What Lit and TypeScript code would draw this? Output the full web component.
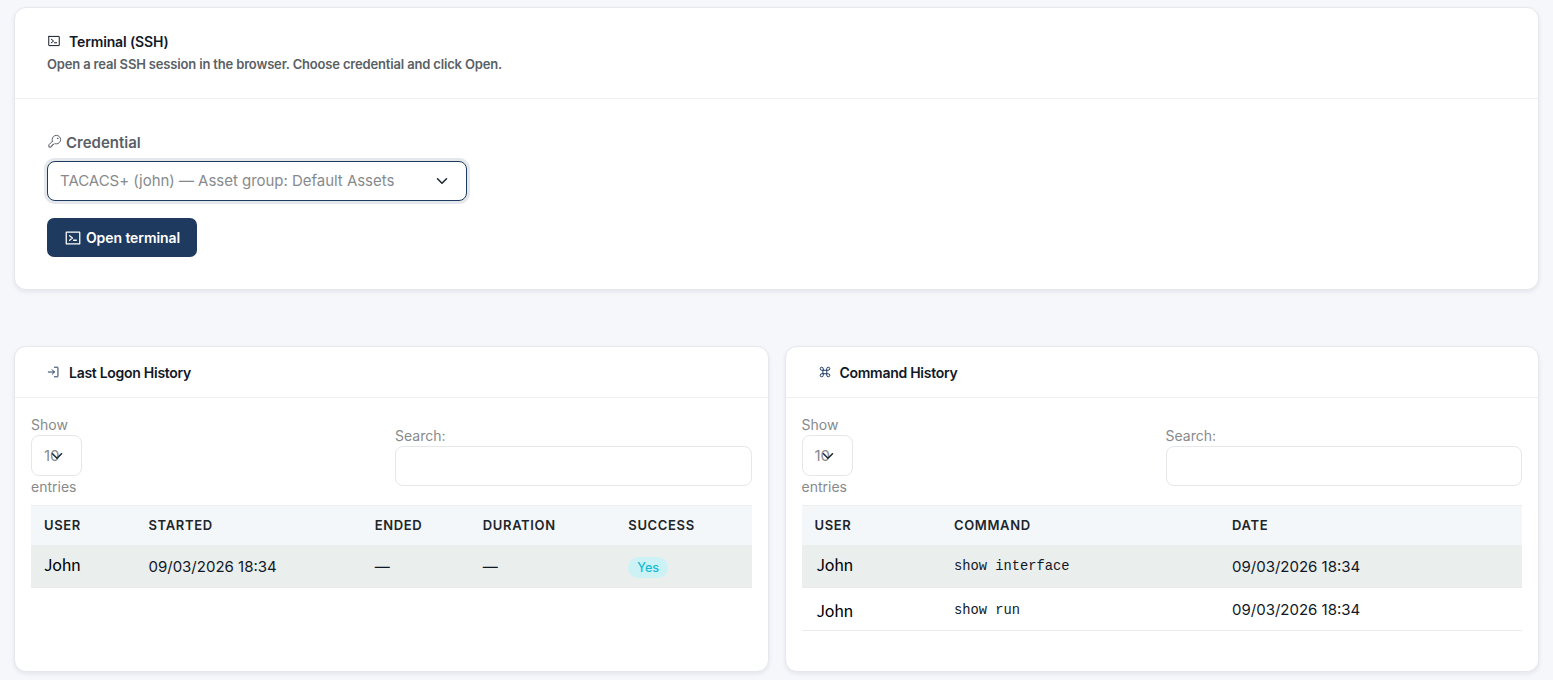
import { html, svg, css, LitElement, TemplateResult } from 'lit';
import { customElement, property } from 'lit/decorators.js';

const ICONS: Record<string, TemplateResult> = {
    terminal: svg`
        <rect x="32" y="44" width="192" height="168" rx="4"/>
        <polyline points="80 96 120 128 80 160"/>
        <line x1="136" y1="160" x2="176" y2="160"/>`,
    key: svg`
        <path d="M93.2 122.8A70.3 70.3 0 0 1 88 96a72 72 0 1 1 72 72 70.3 70.3 0 0 1-26.8-5.2L120 176H96v24H72v24H32v-40l61.2-61.2Z"/>
        <circle cx="180" cy="76" r="5"/>`,
    login: svg`
        <polyline points="94 170 136 128 94 86"/>
        <line x1="24" y1="128" x2="136" y2="128"/>
        <path d="M136 40h56a8 8 0 0 1 8 8v160a8 8 0 0 1-8 8h-56"/>`,
    command: svg`
        <rect x="96" y="96" width="64" height="64"/>
        <path d="M96 96H68a28 28 0 1 1 28-28Z"/>
        <path d="M160 96V68a28 28 0 1 1 28 28Z"/>
        <path d="M160 160h28a28 28 0 1 1-28 28Z"/>
        <path d="M96 160v28a28 28 0 1 1-28-28Z"/>`,
    chevron: svg`<polyline points="32 80 128 176 224 80"/>`,
};

@customElement('ui-icon')
export class UiIcon extends LitElement {
    @property() name = 'terminal';

    static styles = css`
        :host {
            display: inline-flex;
            flex: none;
            width: 14px;
            height: 14px;
        }
        svg {
            width: 100%;
            height: 100%;
            fill: none;
            stroke: currentColor;
            stroke-width: var(--icon-stroke, 18);
            stroke-linecap: round;
            stroke-linejoin: round;
        }
    `;

    render() {
        return html`<svg viewBox="0 0 256 256" aria-hidden="true">${ICONS[this.name]}</svg>`;
    }
}

@customElement('select-box')
export class SelectBox extends LitElement {
    @property() value = '';
    @property({ type: Boolean, reflect: true }) active = false;

    static styles = css`
        :host {
            display: flex;
            align-items: center;
            position: relative;
            box-sizing: border-box;
            border: 1px solid #e6e7ea;
            border-radius: 8px;
            padding: 0 12px 1px;
            background: #fff;
            color: #878a8d;
            font-size: 15px;
            letter-spacing: -0.03px;
            white-space: nowrap;
        }
        :host([active]) {
            border-color: #1e3a5f;
            box-shadow: 0 0 0 3px rgba(30, 58, 95, 0.12);
        }
        .chevron {
            position: absolute;
            right: 18px;
            top: 50%;
            width: 12px;
            height: 12px;
            margin-top: -6px;
            color: #212b36;
            --icon-stroke: 34;
        }
    `;

    render() {
        return html`
            <span>${this.value}</span>
            <ui-icon class="chevron" name="chevron"></ui-icon>
        `;
    }
}

type Cell = { text: string; kind?: 'name' | 'code' | 'badge' };

@customElement('history-card')
export class HistoryCard extends LitElement {
    @property() icon = '';
    @property() heading = '';
    @property({ attribute: false }) columns: { label: string; width: number }[] = [];
    @property({ attribute: false }) rows: Cell[][] = [];

    static styles = css`
        :host {
            display: block;
            box-sizing: border-box;
            background: #fff;
            border: 1px solid #e6e8ee;
            border-radius: 12px;
            box-shadow: 0 2px 4px rgba(20, 30, 60, 0.08);
        }
        .head {
            display: flex;
            align-items: center;
            gap: 8px;
            height: 50px;
            padding: 0 32px;
            border-bottom: 1px solid #eef0f2;
            font-size: 14px;
            font-weight: 600;
            letter-spacing: -0.28px;
            color: #111827;
        }
        .head ui-icon {
            color: #1e3a5f;
            margin-top: -1px;
        }
        .body {
            padding: 16px;
        }
        .tools {
            display: grid;
            grid-template-columns: 1fr 356.5px;
            align-items: center;
            font-size: 14px;
            line-height: 21px;
            color: #878a8d;
        }
        .length select-box {
            width: 51px;
            height: 41px;
        }
        .search input {
            display: block;
            box-sizing: border-box;
            width: 100%;
            height: 40px;
            border: 1px solid #e6e7ea;
            border-radius: 8px;
            background: #fff;
        }
        table {
            width: 100%;
            margin-top: 8px;
            border-collapse: collapse;
            table-layout: fixed;
            text-align: left;
        }
        th {
            height: 39px;
            padding: 0 13px;
            box-sizing: border-box;
            background: #f3f7fa;
            border-top: 1px solid #eceff1;
            font-size: 13px;
            font-weight: 600;
            letter-spacing: 0.65px;
            color: #212529;
        }
        td {
            height: 43px;
            padding: 1px 13px 0;
            box-sizing: border-box;
            border-bottom: 1px solid #e9ebed;
            font-size: 15px;
            color: #111827;
        }
        tbody tr:nth-child(odd) td {
            background: #eaeeed;
        }
        .name {
            display: block;
            padding-bottom: 5px;
            font: 16px/20px 'Noto Sans CJK SC', sans-serif;
            letter-spacing: -0.3px;
            color: #000;
        }
        :host([icon='command']) .name {
            padding-left: 2px;
        }
        tr:nth-child(even) .name {
            padding-top: 1px;
            padding-bottom: 0;
        }
        .code {
            display: block;
            padding-top: 1px;
            font: 13.75px 'Liberation Mono', monospace;
        }
        .badge {
            display: block;
            width: fit-content;
            margin-top: 2px;
            padding: 0 9px;
            border-radius: 11px;
            background: #cdf2f6;
            color: #12bcd6;
            font-size: 12.5px;
            font-weight: 500;
            line-height: 21px;
        }
    `;

    render() {
        return html`
            <div class="head"><ui-icon name=${this.icon}></ui-icon>${this.heading}</div>
            <div class="body">
                <div class="tools">
                    <div class="length">Show<select-box value="10"></select-box>entries</div>
                    <label class="search">Search:<input type="search"></label>
                </div>
                <table>
                    <colgroup>${this.columns.map((c) => html`<col style="width: ${c.width}%">`)}</colgroup>
                    <thead>
                        <tr>${this.columns.map((c) => html`<th>${c.label}</th>`)}</tr>
                    </thead>
                    <tbody>
                        ${this.rows.map((row) => html`
                            <tr>${row.map((cell) => html`<td><span class=${cell.kind ?? 'text'}>${cell.text}</span></td>`)}</tr>
                        `)}
                    </tbody>
                </table>
            </div>
        `;
    }
}

@customElement('app-root')
export class AppRoot extends LitElement {
    logonColumns = [
        { label: 'USER', width: 14.5 },
        { label: 'STARTED', width: 31.4 },
        { label: 'ENDED', width: 15 },
        { label: 'DURATION', width: 20.2 },
        { label: 'SUCCESS', width: 18.9 },
    ];

    logonRows: Cell[][] = [
        [
            { text: 'John', kind: 'name' },
            { text: '09/03/2026 18:34' },
            { text: '—' },
            { text: '—' },
            { text: 'Yes', kind: 'badge' },
        ],
    ];

    commandColumns = [
        { label: 'USER', width: 19.35 },
        { label: 'COMMAND', width: 38.6 },
        { label: 'DATE', width: 42.05 },
    ];

    commandRows: Cell[][] = [
        [{ text: 'John', kind: 'name' }, { text: 'show interface', kind: 'code' }, { text: '09/03/2026 18:34' }],
        [{ text: 'John', kind: 'name' }, { text: 'show run', kind: 'code' }, { text: '09/03/2026 18:34' }],
    ];

    static styles = css`
        :host {
            display: flex;
            flex-direction: column;
            gap: 56px;
            box-sizing: border-box;
            height: 680px;
            padding: 7px 14px 8px;
            overflow: hidden;
            background: #f5f7fb;
            font-family: Inter, sans-serif;
            color: #111827;
        }
        .terminal {
            box-sizing: border-box;
            height: 283px;
            background: #fff;
            border: 1px solid #e6e8ee;
            border-radius: 12px;
            box-shadow: 0 2px 4px rgba(20, 30, 60, 0.08);
        }
        .head {
            box-sizing: border-box;
            height: 91px;
            padding: 24px 32px 0;
            border-bottom: 1px solid #eef0f2;
        }
        .title {
            display: flex;
            align-items: center;
            gap: 8px;
            font-size: 14px;
            font-weight: 600;
            letter-spacing: -0.14px;
            line-height: 20px;
        }
        .title ui-icon {
            margin-top: -2px;
        }
        .hint {
            margin-top: 2px;
            font-size: 13px;
            font-weight: 600;
            letter-spacing: -0.165px;
            line-height: 21px;
            color: #5a5f66;
        }
        .form {
            padding: 32px;
        }
        .label {
            display: flex;
            align-items: center;
            gap: 4px;
            font-size: 15px;
            font-weight: 600;
            line-height: 23px;
            color: #5a5f66;
        }
        .label ui-icon {
            width: 15px;
            height: 15px;
            margin-top: -2px;
            --icon-stroke: 17;
        }
        .form select-box {
            width: 420px;
            height: 40px;
            margin-top: 7px;
        }
        .open {
            display: flex;
            align-items: center;
            justify-content: center;
            gap: 4px;
            width: 150px;
            height: 39px;
            margin-top: 17px;
            padding: 0;
            border: 0;
            border-radius: 7px;
            background: #1e3a5f;
            color: #fff;
            font: 600 14px Inter, sans-serif;
            letter-spacing: -0.08px;
        }
        .open ui-icon {
            width: 18px;
            height: 18px;
        }
        .history {
            display: grid;
            flex: 1;
            grid-template-columns: 1fr 1fr;
            gap: 16px;
        }
    `;

    render() {
        return html`
            <section class="terminal">
                <div class="head">
                    <div class="title"><ui-icon name="terminal"></ui-icon>Terminal (SSH)</div>
                    <div class="hint">Open a real SSH session in the browser. Choose credential and click Open.</div>
                </div>
                <div class="form">
                    <div class="label"><ui-icon name="key"></ui-icon>Credential</div>
                    <select-box active value="TACACS+ (john) — Asset group: Default Assets"></select-box>
                    <button class="open"><ui-icon name="terminal"></ui-icon>Open terminal</button>
                </div>
            </section>
            <section class="history">
                <history-card
                    icon="login"
                    heading="Last Logon History"
                    .columns=${this.logonColumns}
                    .rows=${this.logonRows}
                ></history-card>
                <history-card
                    icon="command"
                    heading="Command History"
                    .columns=${this.commandColumns}
                    .rows=${this.commandRows}
                ></history-card>
            </section>
        `;
    }
}
